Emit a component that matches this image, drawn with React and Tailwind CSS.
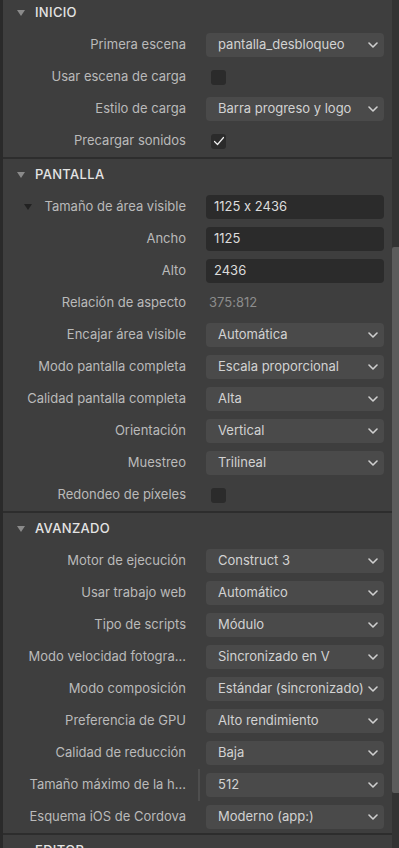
import React from 'react'

function Tri({ className }) {
  return (
    <svg width="8" height="6" viewBox="0 0 8 6" className={className}>
      <polygon points="0,0 8,0 4,6" fill="currentColor" />
    </svg>
  )
}

function Chevron() {
  return (
    <svg width="10" height="6" viewBox="0 0 10 6" className="text-[#cfcfcf]">
      <polyline points="1,1 5,5 9,1" fill="none" stroke="currentColor" strokeWidth="1.6" strokeLinecap="round" strokeLinejoin="round" />
    </svg>
  )
}

function Header({ title, first }) {
  return (
    <div className={`h-[32px] shrink-0 flex items-center ${first ? '-mt-[3px]' : ''}`}>
      <Tri className="ml-[14px] text-[#8a8a8a]" />
      <span className="ml-[10px] text-[13px] font-medium text-[#e4e4e4] tracking-wide">{title}</span>
    </div>
  )
}

function Divider() {
  return <div className="h-[2px] shrink-0 bg-[#2d2d2d]" />
}

function Row({ label, children, sub, splitter }) {
  return (
    <div className="h-[32px] shrink-0 flex items-center">
      <div className="w-[183px] flex items-center justify-end text-[13px] text-[#bababa] whitespace-nowrap">
        {sub && <Tri className="text-[#222222] mr-[12px]" />}
        <span>{label}</span>
      </div>
      <div className="w-[20px] h-full flex">
        {splitter && <div className="ml-[12px] w-[2px] h-full bg-[#4e4e4e]" />}
      </div>
      <div className="w-[178px] flex items-center">{children}</div>
    </div>
  )
}

function Select({ value }) {
  return (
    <div className="w-full h-[24px] rounded-[4px] bg-[#4a4a4a] flex items-center justify-between pl-[12px] pr-[6px] text-[13px] text-[#d2d2d2] whitespace-nowrap">
      <span>{value}</span>
      <Chevron />
    </div>
  )
}

function Input({ value }) {
  return (
    <div className="w-full h-[24px] rounded-[4px] bg-[#2b2b2b] flex items-center pl-[8px] text-[13px] text-[#dcdcdc]">
      {value}
    </div>
  )
}

function Check({ checked }) {
  return (
    <div className="ml-[5px] w-[15px] h-[15px] rounded-[3px] bg-[#2b2b2b] flex items-center justify-center">
      {checked && (
        <svg width="12" height="10" viewBox="0 0 12 10">
          <polyline points="1.5,5.5 4.5,8.5 10.5,1.5" fill="none" stroke="#f0f0f0" strokeWidth="1.2" strokeLinecap="round" strokeLinejoin="round" />
        </svg>
      )}
    </div>
  )
}

export default function App() {
  return (
    <div className="w-[399px] h-[848px] overflow-hidden flex bg-[#3e3e3e] font-[Inter,'Noto_Sans','Liberation_Sans',sans-serif] [font-feature-settings:'calt'_0]">
      <div className="w-[3px] bg-[#2a2a2a]" />
      <div className="flex-1 flex flex-col">
        <Header title="INICIO" first />
        <Row label="Primera escena"><Select value="pantalla_desbloqueo" /></Row>
        <Row label="Usar escena de carga"><Check /></Row>
        <Row label="Estilo de carga"><Select value="Barra progreso y logo" /></Row>
        <Row label="Precargar sonidos"><Check checked /></Row>
        <Divider />
        <Header title="PANTALLA" />
        <Row label="Tamaño de área visible" sub><Input value="1125 x 2436" /></Row>
        <Row label="Ancho"><Input value="1125" /></Row>
        <Row label="Alto"><Input value="2436" /></Row>
        <Row label="Relación de aspecto">
          <span className="ml-[3px] text-[13px] text-[#8c8c8c]">375:812</span>
        </Row>
        <Row label="Encajar área visible"><Select value="Automática" /></Row>
        <Row label="Modo pantalla completa"><Select value="Escala proporcional" /></Row>
        <Row label="Calidad pantalla completa"><Select value="Alta" /></Row>
        <Row label="Orientación"><Select value="Vertical" /></Row>
        <Row label="Muestreo"><Select value="Trilineal" /></Row>
        <Row label="Redondeo de píxeles"><Check /></Row>
        <Divider />
        <Header title="AVANZADO" />
        <Row label="Motor de ejecución"><Select value="Construct 3" /></Row>
        <Row label="Usar trabajo web"><Select value="Automático" /></Row>
        <Row label="Tipo de scripts"><Select value="Módulo" /></Row>
        <Row label="Modo velocidad fotogra..."><Select value="Sincronizado en V" /></Row>
        <Row label="Modo composición"><Select value="Estándar (sincronizado)" /></Row>
        <Row label="Preferencia de GPU"><Select value="Alto rendimiento" /></Row>
        <Row label="Calidad de reducción"><Select value="Baja" /></Row>
        <Row label="Tamaño máximo de la h..." splitter><Select value="512" /></Row>
        <Row label="Esquema iOS de Cordova"><Select value="Moderno (app:)" /></Row>
        <Divider />
        <Header title="EDITOR" />
      </div>
      <div className="w-[7px] bg-[#333333] flex flex-col">
        <div className="mt-[247px] h-[546px] shrink-0 bg-[#5c5c5c] rounded-l-[2px]" />
      </div>
    </div>
  )
}
